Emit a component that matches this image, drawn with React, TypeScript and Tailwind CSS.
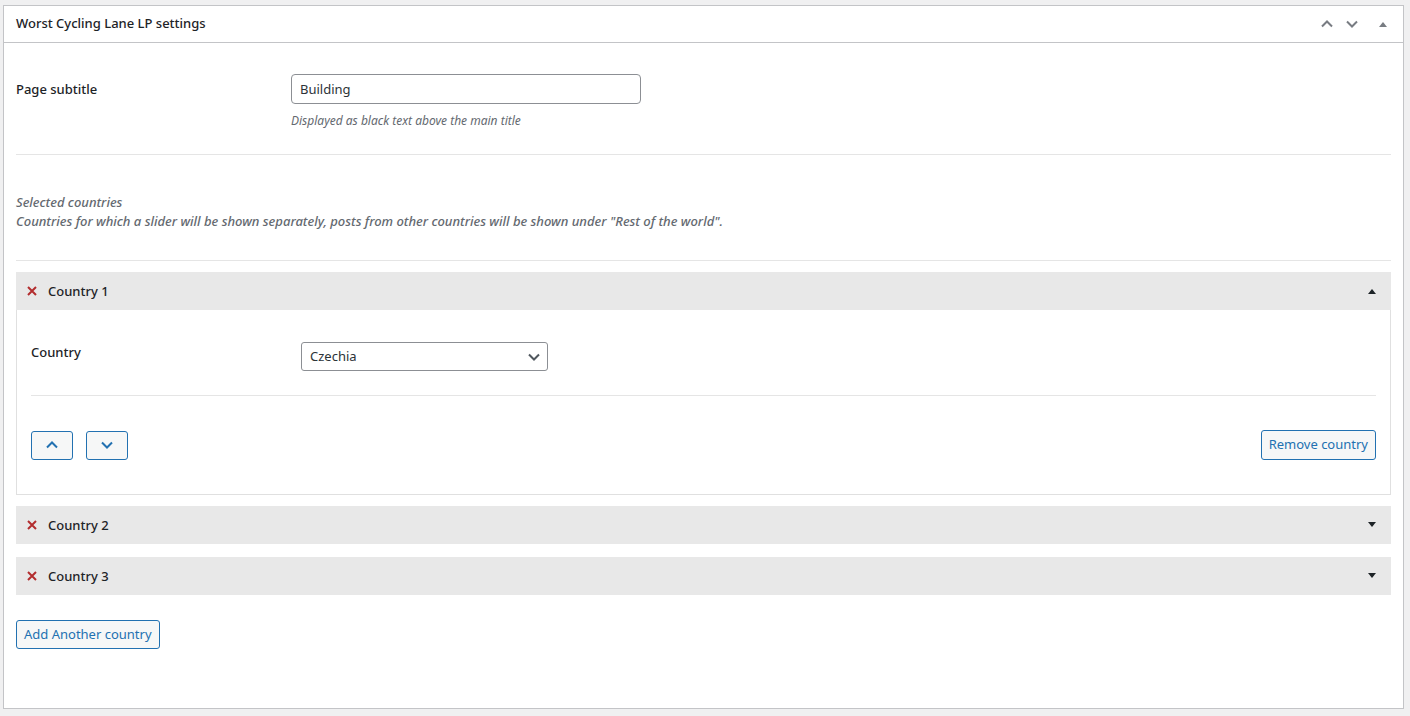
import React from 'react';

const font = { fontFamily: '"Noto Sans", "Open Sans", Arial, sans-serif' };

function Chevron({ up, className }: { up?: boolean; className?: string }) {
  return (
    <svg width="14" height="14" viewBox="0 0 14 14" className={className} fill="none">
      <path
        d={up ? 'M2 9.5 L7 4.5 L12 9.5' : 'M2 4.5 L7 9.5 L12 4.5'}
        stroke="currentColor"
        strokeWidth="2"
      />
    </svg>
  );
}

function Tri({ up }: { up?: boolean }) {
  return (
    <svg width="10" height="8" viewBox="0 0 10 8" className="text-[#1d2327]">
      <path d={up ? 'M1 7 L5 2 L9 7 Z' : 'M1 1 L9 1 L5 6 Z'} fill="currentColor" />
    </svg>
  );
}

function RedX() {
  return (
    <svg width="12" height="12" viewBox="0 0 12 12" className="text-[#b32d2e]">
      <path d="M2 2 L10 10 M10 2 L2 10" stroke="currentColor" strokeWidth="2" />
    </svg>
  );
}

function CountryHeader({ name, open }: { name: string; open?: boolean }) {
  return (
    <div className="flex items-center h-[38px] bg-[#e8e8e8] pl-[10px] pr-[14px]">
      <RedX />
      <span className="ml-[10px] pt-[1px] text-[13px] font-medium text-[#1d2327]">{name}</span>
      <span className="ml-auto flex">
        <Tri up={open} />
      </span>
    </div>
  );
}

export default function App() {
  return (
    <div className="min-h-[716px] bg-[#f0f0f1] pt-[5px] pl-[3px] pb-[8px]" style={font}>
      <div className="bg-white border border-[#c3c4c7] w-[1401px]">
        {/* Header */}
        <div className="flex items-center h-[37px] border-b border-[#c3c4c7] pl-[12px] pr-[15px]">
          <h2 className="text-[13px] font-medium text-[#1d2327]">Worst Cycling Lane LP settings</h2>
          <div className="ml-auto flex items-center gap-[11px] text-[#787c82]">
            <Chevron up />
            <Chevron />
            <span className="ml-[8px] flex"><svg width="10" height="8" viewBox="0 0 10 8"><path d="M1 7 L5 2 L9 7 Z" fill="#787c82" /></svg></span>
          </div>
        </div>

        {/* Body */}
        <div className="px-[12px] pb-[59px]">
          <div className="flex pt-[31px] pb-[24px] border-b border-[#e5e5e5]">
            <label className="w-[275px] pt-[6px] text-[13px] font-medium text-[#1d2327]">Page subtitle</label>
            <div className="flex flex-col">
              <input
                defaultValue="Building"
                className="w-[350px] h-[30px] border border-[#8c8f94] rounded-[4px] px-[8px] text-[13px] text-[#2c3338] outline-none"
                style={font}
              />
              <p className="mt-[8px] text-[12px] italic text-[#646970]">Displayed as black text above the main title</p>
            </div>
          </div>

          <div className="pt-[38px] pb-[29px] border-b border-[#e5e5e5] text-[13px] italic font-medium text-[#646970] leading-[19px]">
            <div>Selected countries</div>
            <div>Countries for which a slider will be shown separately, posts from other countries will be shown under "Rest of the world".</div>
          </div>

          <div className="mt-[11px]">
            <CountryHeader name="Country 1" open />
            <div className="border border-t-0 border-[#e0e0e0] px-[14px] pb-[34px]">
              <div className="flex pt-[32px] pb-[24px] border-b border-[#e5e5e5]">
                <label className="w-[270px] pt-[1px] text-[13px] font-medium text-[#1d2327]">Country</label>
                <div className="relative w-[247px] h-[29px]">
                  <select
                    className="appearance-none w-full h-full border border-[#8c8f94] rounded-[3px] pl-[8px] text-[13px] text-[#2c3338] bg-white outline-none"
                    style={font}
                    defaultValue="Czechia"
                  >
                    <option>Czechia</option>
                  </select>
                  <Chevron className="absolute right-[7px] top-[8px] text-[#50575e] pointer-events-none" />
                </div>
              </div>
              <div className="flex items-center pt-[34px]">
                <button className="flex items-center justify-center w-[42px] h-[29px] border border-[#2271b1] rounded-[3px] bg-[#f6f7f7] text-[#2271b1]">
                  <Chevron up />
                </button>
                <button className="ml-[13px] flex items-center justify-center w-[42px] h-[29px] border border-[#2271b1] rounded-[3px] bg-[#f6f7f7] text-[#2271b1]">
                  <Chevron />
                </button>
                <button className="ml-auto h-[30px] px-[7px] border border-[#2271b1] rounded-[3px] bg-[#f6f7f7] text-[13px] text-[#2271b1]">
                  Remove country
                </button>
              </div>
            </div>
          </div>

          <div className="mt-[11px]">
            <CountryHeader name="Country 2" />
          </div>
          <div className="mt-[13px]">
            <CountryHeader name="Country 3" />
          </div>

          <button className="mt-[25px] h-[29px] px-[7px] border border-[#2271b1] rounded-[3px] bg-[#f6f7f7] text-[13px] text-[#2271b1]">
            Add Another country
          </button>
        </div>
      </div>
    </div>
  );
}
